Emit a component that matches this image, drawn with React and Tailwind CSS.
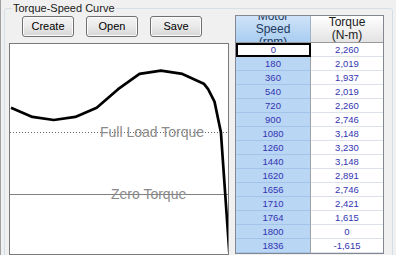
import React from 'react';

const rows = [
  [0, 2260], [180, 2019], [360, 1937], [540, 2019], [720, 2260],
  [900, 2746], [1080, 3148], [1260, 3230], [1440, 3148], [1620, 2891],
  [1656, 2746], [1710, 2421], [1764, 1615], [1800, 0], [1836, -1615],
];

const fmt = (n) => n.toLocaleString('en-US');

// page coords: speed -> x, torque -> y
const px = (s) => 11 + s * 0.119;
const py = (t) => 193.8 - t * 0.0381;

const Btn = ({ children }) => (
  <button className="w-[52px] h-[21px] rounded-[3px] border border-[#707070] bg-linear-to-b from-[#f4f4f4] via-[#e9e9e9] to-[#d6d6d6] shadow-[inset_0_0_0_1px_#fbfbfb] text-[11px] leading-[13px] text-black">
    {children}
  </button>
);

const Chart = () => {
  const pts = rows.map(([s, t]) => `${px(s).toFixed(1)},${py(t).toFixed(1)}`).join(' ');
  return (
    <div className="mt-[6px] w-[220px] h-[212px] border border-[#7a7a7a] bg-white">
      <svg width="218" height="210" viewBox="10 44 218 210" className="block">
        <line x1="10" y1="132.5" x2="228" y2="132.5" stroke="#6a6a6a" strokeWidth="1" strokeDasharray="1 2" />
        <line x1="10" y1="194.5" x2="228" y2="194.5" stroke="#808080" strokeWidth="1" />
        <text x="100" y="137" fontSize="14" fill="#8a8a8a" fontFamily="Liberation Sans, Arial, sans-serif">Full Load Torque</text>
        <text x="111" y="199" fontSize="14" fill="#8a8a8a" fontFamily="Liberation Sans, Arial, sans-serif">Zero Torque</text>
        <polyline points={pts} fill="none" stroke="#000" strokeWidth="2.7" strokeLinejoin="round" />
      </svg>
    </div>
  );
};

const Table = () => (
  <div className="mt-[6px] ml-[6px] w-[149px] border border-[#828790] bg-white self-start">
    {/* header */}
    <div className="flex h-[27px] border-b border-[#9a9a9a]">
      <div className="w-[75px] border-r border-[#9fb3c8] bg-linear-to-b from-[#cfe3f8] to-[#a9cdf1] overflow-hidden flex flex-col items-center justify-center text-[12px] leading-[13px] text-[#1e3a60]">
        <span>Motor</span>
        <span>Speed</span>
        <span>(rpm)</span>
      </div>
      <div className="flex-1 bg-linear-to-b from-white to-[#e3e3e3] flex flex-col items-center justify-center text-[12px] leading-[13px] text-[#1a1a1a]">
        <span>Torque</span>
        <span>(N-m)</span>
      </div>
    </div>
    {rows.map(([s, t], i) => (
      <div key={s} className="flex h-[14px] text-[9.5px] leading-[13px] text-[#3434b2]">
        <div
          className={`w-[75px] text-center ${
            i === 0
              ? 'bg-white shadow-[inset_0_0_0_2px_#000]'
              : 'bg-[#b9d6f4] border-b border-b-[#a3c4e8] border-r border-r-[#a0a0a0]'
          }`}
        >
          {s}
        </div>
        <div className="flex-1 text-center border-b border-[#dde2ea]">{fmt(t)}</div>
      </div>
    ))}
  </div>
);

export default function App() {
  return (
    <div className="w-[396px] h-[255px] overflow-hidden bg-[#f0f0f0] border-l border-[#a0a0a0] pl-[3px] pt-[8px] font-['Liberation_Sans',Arial,sans-serif]">
      <div className="relative w-[389px] h-[270px] border border-[#d5dfe5] rounded-[3px]">
        <span className="absolute left-[7px] top-[-7px] px-[1px] bg-[#f0f0f0] text-[11px] leading-[13px] text-[#1a1a1a]">
          Torque-Speed Curve
        </span>
        <div className="flex pl-[4px]">
          <div className="w-[220px] pt-[7px]">
            <div className="flex gap-[12px] pl-[13px]">
              <Btn>Create</Btn>
              <Btn>Open</Btn>
              <Btn>Save</Btn>
            </div>
            <Chart />
          </div>
          <Table />
        </div>
      </div>
    </div>
  );
}
